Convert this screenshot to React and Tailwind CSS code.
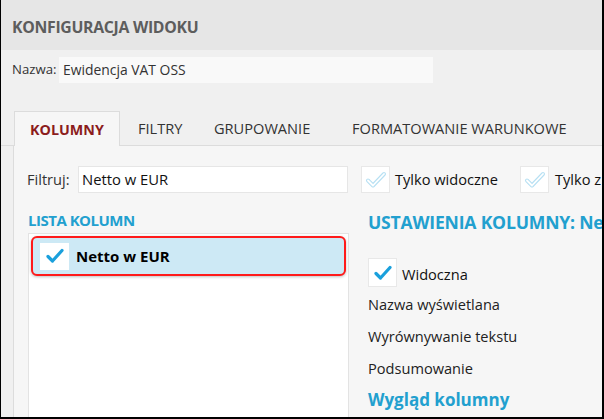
import React from "react";

const font = { fontFamily: '"Open Sans", "Noto Sans", sans-serif' };

function BlueCheck() {
  return (
    <svg width="18" height="16" viewBox="0 0 18 16">
      <path d="M2 8.5 L6.5 13 L16 2.5" fill="none" stroke="#1aa0dc" strokeWidth="3.2" strokeLinecap="round" strokeLinejoin="round" />
    </svg>
  );
}

function GhostCheck() {
  return (
    <svg width="22" height="18" viewBox="0 0 22 18">
      <path d="M3 9.5 L8 14.5 L19 3" fill="none" stroke="#b7e0f3" strokeWidth="4" strokeLinecap="round" strokeLinejoin="round" />
      <path d="M3 9.5 L8 14.5 L19 3" fill="none" stroke="#ffffff" strokeWidth="1.8" strokeLinecap="round" strokeLinejoin="round" />
    </svg>
  );
}

export default function App() {
  return (
    <div className="w-[604px] h-[419px] overflow-hidden bg-[#f0f0f0] border-l border-r-2 border-b-2 border-black flex flex-col text-[#222]" style={font}>
      <div className="h-[50px] shrink-0 bg-[#e6e6e6] flex items-center pl-[11px] pt-[6px]">
        <span className="text-[15.8px] font-bold text-[#5d5d5d] tracking-[-0.3px]">KONFIGURACJA WIDOKU</span>
      </div>
      <div className="flex items-center pl-[11px] mt-[7px] h-[26px] shrink-0">
        <span className="text-[13.2px] text-[#333] w-[47px]">Nazwa:</span>
        <div className="w-[374px] h-[26px] bg-[#f9f9f9] flex items-center pl-[4px] text-[13.9px] text-[#333]">Ewidencja VAT OSS</div>
      </div>
      <div className="mt-[29px] flex items-end h-[34px] border-b border-[#dcdcdc] pl-[13px] shrink-0 whitespace-nowrap">
        <div className="h-[35px] w-[106px] -mb-px bg-[#f6f6f6] border border-b-0 border-[#dcdcdc] flex items-center justify-center text-[14.3px] font-bold text-[#8b1c1c] pt-[2px]">KOLUMNY</div>
        <div className="h-[34px] flex items-center text-[14.6px] text-[#333] ml-[18px] w-[76px] pt-[2px]">FILTRY</div>
        <div className="h-[34px] flex items-center text-[14.6px] text-[#333] w-[138px] pt-[2px]">GRUPOWANIE</div>
        <div className="h-[34px] flex items-center text-[14.6px] text-[#333] pt-[2px]">FORMATOWANIE WARUNKOWE</div>
      </div>
      <div className="flex-1 ml-[12px] bg-[#f6f6f6] border-l border-[#dcdcdc] flex flex-col pl-[14px] min-h-0">
        <div className="flex items-center mt-[20px] h-[27px] whitespace-nowrap shrink-0">
          <span className="text-[14.6px] text-[#333] w-[51px] -ml-[1px]">Filtruj:</span>
          <div className="w-[270px] h-[27px] bg-white border border-[#e6e6e6] flex items-center pl-[3px] text-[14.8px] text-[#111] shrink-0">Netto w EUR</div>
          <div className="ml-[13px] w-[29px] h-[27px] bg-white border border-[#e8e8e8] flex items-center justify-center shrink-0"><GhostCheck /></div>
          <span className="ml-[5px] w-[125px] text-[14.6px] text-[#111] shrink-0">Tylko widoczne</span>
          <div className="w-[29px] h-[27px] bg-white border border-[#e8e8e8] flex items-center justify-center shrink-0"><GhostCheck /></div>
          <span className="ml-[6px] text-[14.6px] text-[#111]">Tylko z</span>
        </div>
        <div className="flex flex-1 mt-[17px] min-w-0">
          <div className="w-[321px] shrink-0 flex flex-col">
            <div className="text-[15px] font-bold text-[#22a0cf] leading-[20px] h-[23px] tracking-[-0.5px]">LISTA KOLUMN</div>
            <div className="flex-1 bg-white border border-[#e3e3e3] border-b-0 p-[2px]">
              <div className="h-[40px] rounded-[6px] border-2 border-[#ff1a1a] bg-[#cde9f5] shadow-[0_1px_3px_rgba(0,0,0,0.25)] flex items-center pl-[7px]">
                <div className="w-[29px] h-[27px] bg-white flex items-center justify-center"><BlueCheck /></div>
                <span className="ml-[7px] text-[15px] font-bold text-black">Netto w EUR</span>
              </div>
            </div>
          </div>
          <div className="ml-[19px] flex flex-col whitespace-nowrap min-w-0">
            <div className="text-[17.6px] font-bold text-[#22a0cf] leading-[22px] h-[22px] tracking-[-0.2px] mt-[1px]">USTAWIENIA KOLUMNY: Netto w EUR</div>
            <div className="flex items-center mt-[25px] h-[29px]">
              <div className="w-[29px] h-[29px] bg-white border border-[#e8e8e8] flex items-center justify-center"><BlueCheck /></div>
              <span className="ml-[5px] mt-[4px] text-[14.6px] text-[#111]">Widoczna</span>
            </div>
            <div className="text-[14.6px] text-[#222] mt-[7px] h-[32px] leading-[20px]">Nazwa wyświetlana</div>
            <div className="text-[14.6px] text-[#222] h-[32px] leading-[20px]">Wyrównywanie tekstu</div>
            <div className="text-[14.6px] text-[#222] h-[31px] leading-[20px]">Podsumowanie</div>
            <div className="text-[17px] font-bold text-[#22a0cf] leading-[22px]">Wygląd kolumny</div>
          </div>
        </div>
      </div>
    </div>
  );
}
